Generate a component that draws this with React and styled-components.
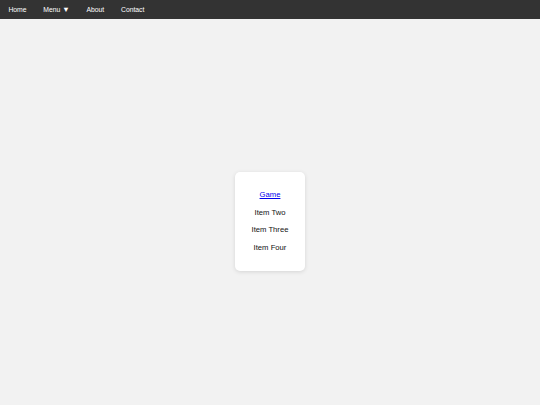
import React from 'react';
import styled, { createGlobalStyle } from 'styled-components';

const GlobalStyle = createGlobalStyle`
  html, body {
    margin: 0;
    padding: 0;
    background: #f2f2f2;
    font-family: "Liberation Sans", Arial, sans-serif;
    overflow: hidden;
  }
`;

const NavBar = styled.nav`
  height: 18.7px;
  background: #333;
  display: flex;
  align-items: center;
`;

const NavLink = styled.a`
  color: #fff;
  text-decoration: none;
  font-size: 6.8px;
  padding: 0 8.4px;
  white-space: nowrap;
`;

const Caret = styled.span`
  font-size: 7.5px;
`;

const Main = styled.main`
  height: 100vh;
  display: flex;
  align-items: center;
  justify-content: center;
`;

const Card = styled.div`
  background: #fff;
  border-radius: 5px;
  box-shadow: 0 1px 4px rgba(0, 0, 0, 0.12);
  padding: 14.5px 0;
  width: 70px;
  display: flex;
  flex-direction: column;
  align-items: center;
`;

const Item = styled.a`
  display: block;
  height: 17.5px;
  line-height: 17.5px;
  font-size: 7.67px;
  color: ${({ $link }) => ($link ? '#0000ee' : '#111')};
  text-decoration: ${({ $link }) => ($link ? 'underline' : 'none')};
  text-align: center;
  white-space: nowrap;
`;

export default function App() {
  return (
    <>
      <GlobalStyle />
      <NavBar>
        <NavLink href="#">Home</NavLink>
        <NavLink href="#">Menu <Caret>▼</Caret></NavLink>
        <NavLink href="#">About</NavLink>
        <NavLink href="#">Contact</NavLink>
      </NavBar>
      <Main>
        <Card>
          <Item href="#" $link>Game</Item>
          <Item>Item Two</Item>
          <Item>Item Three</Item>
          <Item>Item Four</Item>
        </Card>
      </Main>
    </>
  );
}
